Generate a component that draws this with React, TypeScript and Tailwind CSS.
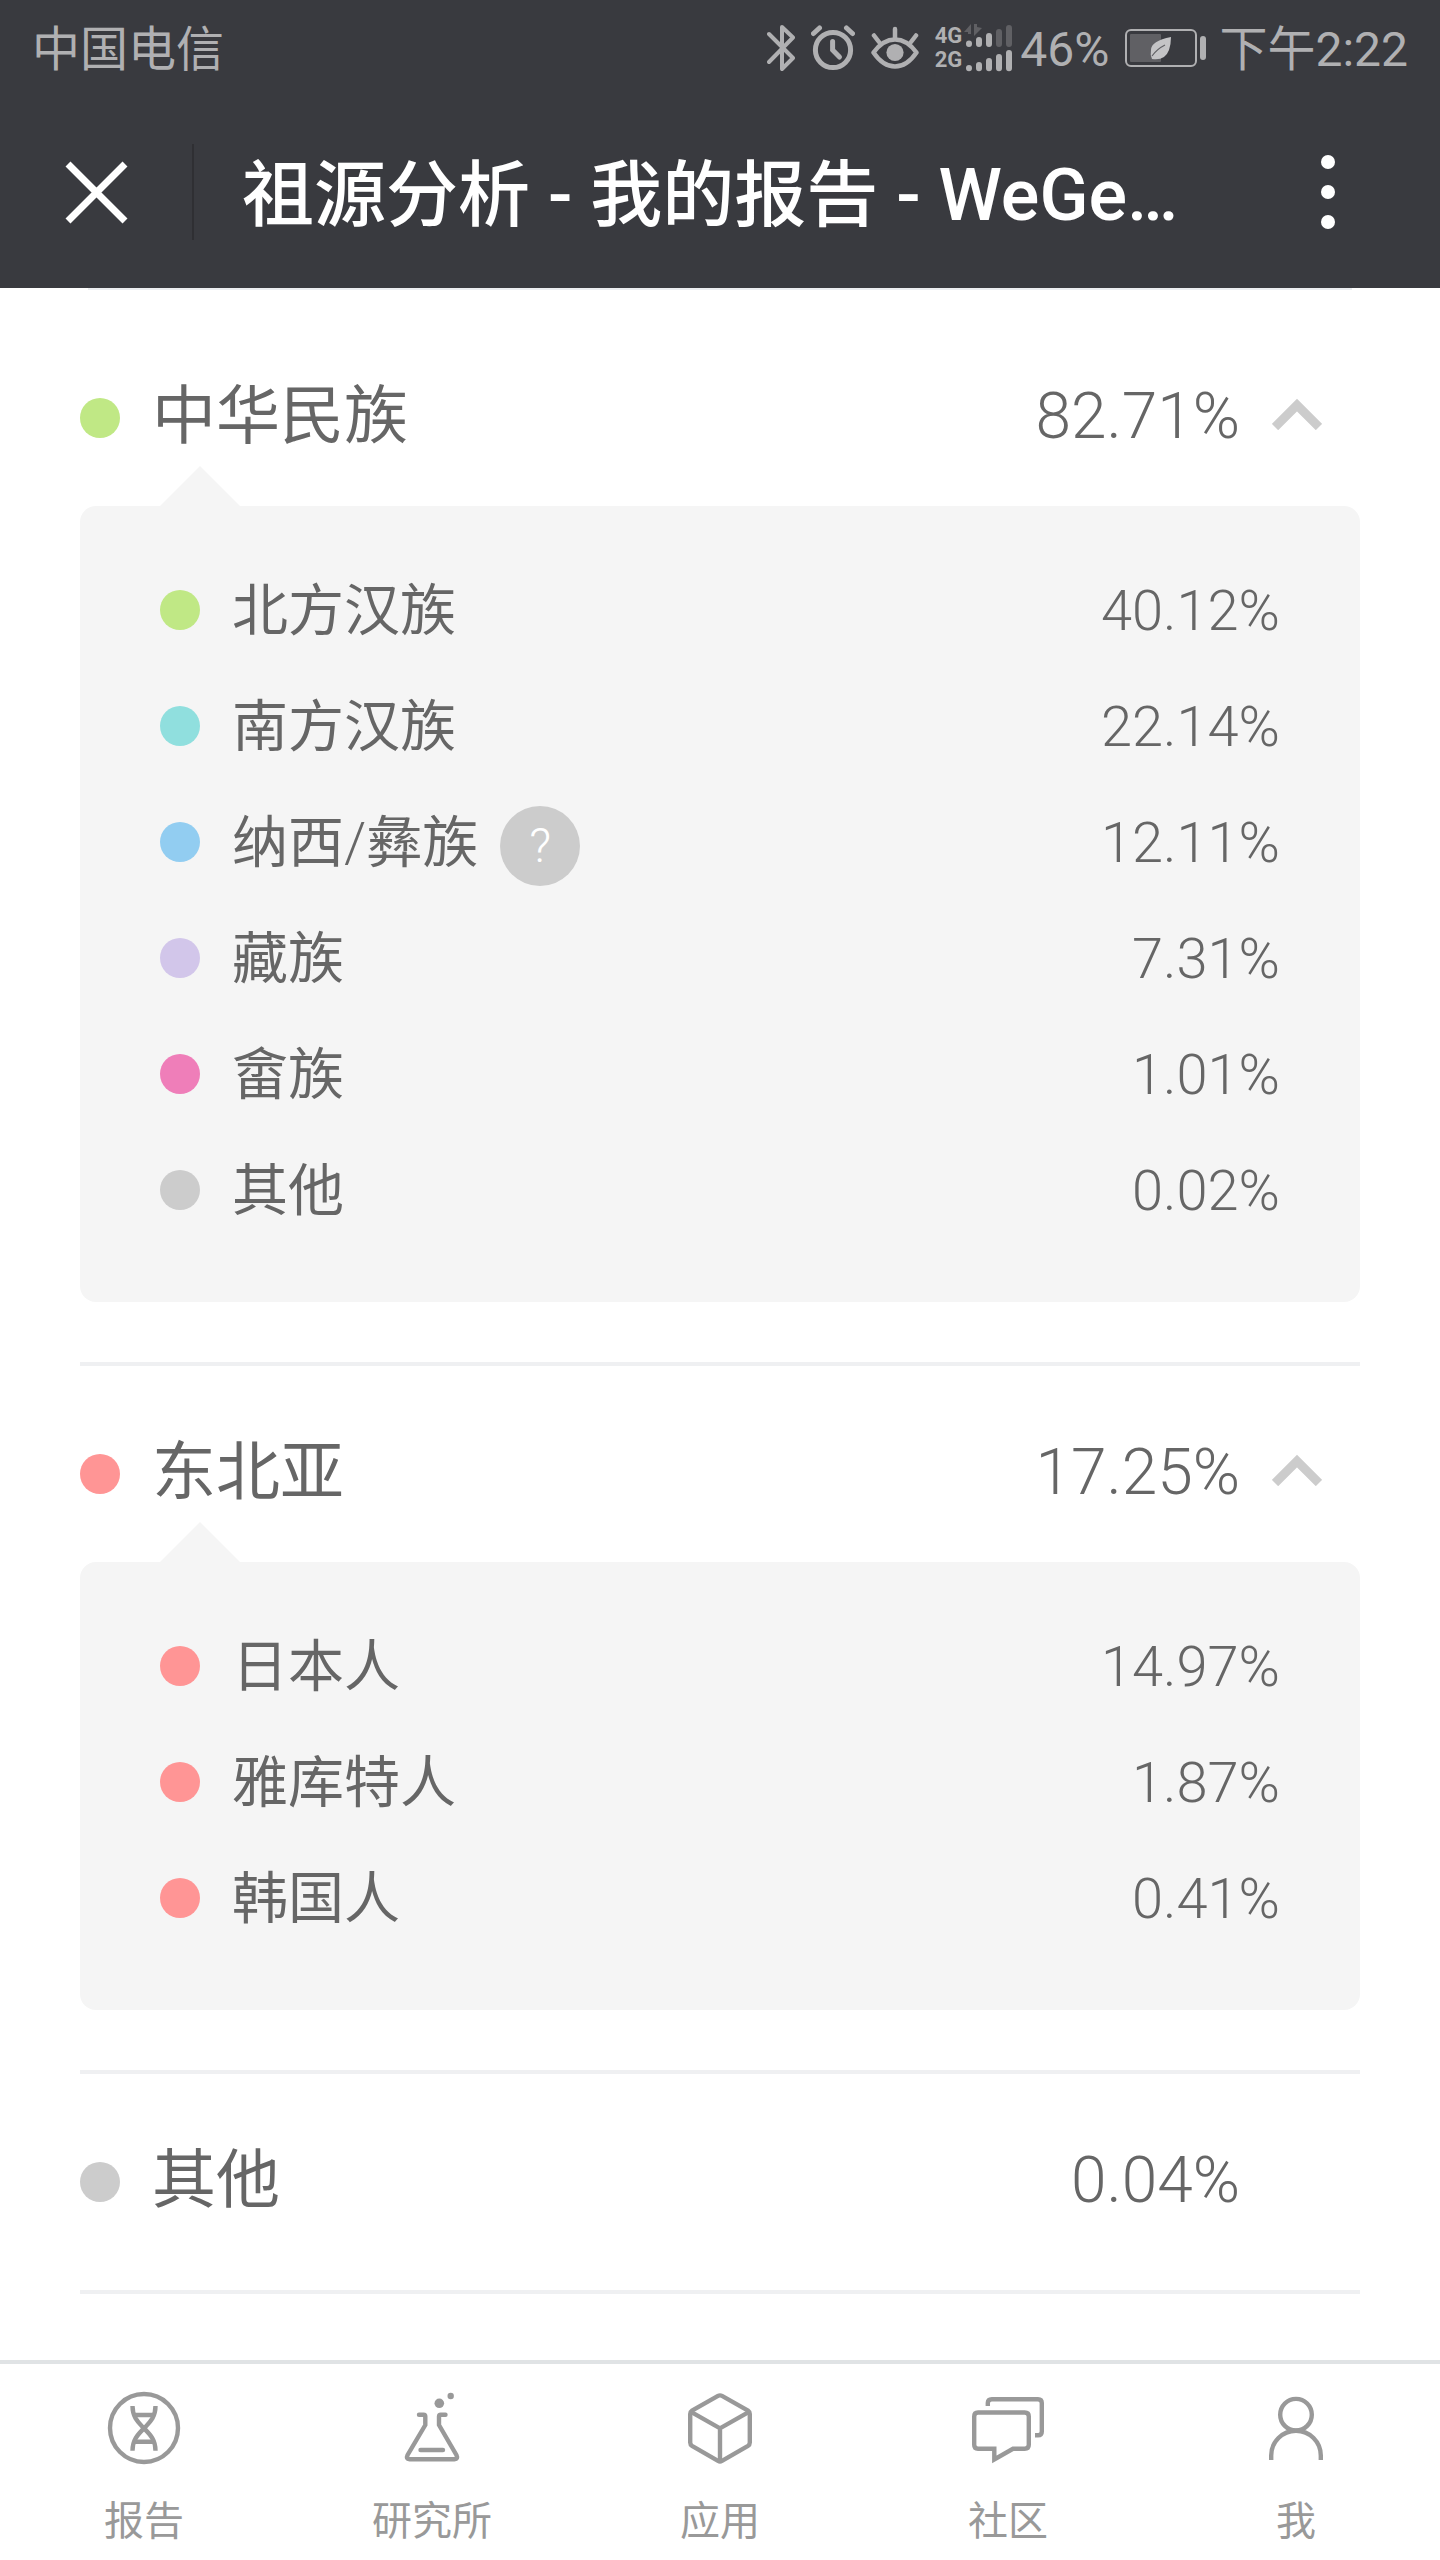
import { useState } from "react";
import type { ReactNode } from "react";

type Item = { name: ReactNode; value: string; dot: string; help?: boolean };
type Group = { name: string; value: string; dot: string; items?: Item[] };

const groups: Group[] = [
  {
    name: "中华民族",
    value: "82.71%",
    dot: "bg-[#c0e885]",
    items: [
      { name: "北方汉族", value: "40.12%", dot: "bg-[#c0e885]" },
      { name: "南方汉族", value: "22.14%", dot: "bg-[#90dfde]" },
      {
        name: (
          <>
            纳西<span className="font-light">/</span>彝族
          </>
        ),
        value: "12.11%",
        dot: "bg-[#92cdf1]",
        help: true,
      },
      { name: "藏族", value: "7.31%", dot: "bg-[#d2c6ea]" },
      { name: "畲族", value: "1.01%", dot: "bg-[#ef7eb9]" },
      { name: "其他", value: "0.02%", dot: "bg-[#cccccc]" },
    ],
  },
  {
    name: "东北亚",
    value: "17.25%",
    dot: "bg-[#ff9595]",
    items: [
      { name: "日本人", value: "14.97%", dot: "bg-[#ff9595]" },
      { name: "雅库特人", value: "1.87%", dot: "bg-[#ff9595]" },
      { name: "韩国人", value: "0.41%", dot: "bg-[#ff9595]" },
    ],
  },
  { name: "其他", value: "0.04%", dot: "bg-[#cccccc]" },
];

const tabs: { label: string; icon: ReactNode }[] = [
  {
    label: "报告",
    icon: (
      <>
        <circle cx="40" cy="40" r="34" />
        <path d="M28.5 18C28.5 30 35 35 40 40.3C45 45.6 51.5 51 51.5 62.7" />
        <path d="M51.5 18C51.5 30 45 35 40 40.3C35 45.6 28.5 51 28.5 62.7" />
        <path d="M31 27H49M31 53.7H49" />
      </>
    ),
  },
  {
    label: "研究所",
    icon: (
      <>
        <path
          d="M27 26.7H31.5Q33.3 26.7 33.3 28.5V37L15.6 67Q13.6 71.3 17.5 71.3H62.5Q66.4 71.3 64.4 67L47 37V28.5Q47 26.7 48.8 26.7H53.5"
          strokeLinecap="round"
        />
        <path d="M28.5 62H51" strokeLinecap="round" />
        <circle cx="47.3" cy="15.3" r="4.8" fill="currentColor" stroke="none" />
        <circle cx="58.7" cy="8" r="3.2" fill="currentColor" stroke="none" />
      </>
    ),
  },
  {
    label: "应用",
    icon: (
      <>
        <path d="M38 7.9Q40 6.8 42 7.9L68 22.6Q69.8 23.8 69.8 26V54.5Q69.8 56.7 68 57.8L42 72.9Q40 74 38 72.9L12 57.8Q10.2 56.7 10.2 54.5V26Q10.2 23.8 12 22.6Z" />
        <path d="M11 23.8L40 40.3L69 23.8M40 40.3V73" />
      </>
    ),
  },
  {
    label: "社区",
    icon: (
      <>
        <path d="M10 24.5H56.7Q60.8 24.5 60.8 28.5V56.8Q60.8 60.8 56.7 60.8H45L26.3 71.5V60.8H10Q6.2 60.8 6.2 56.8V28.5Q6.2 24.5 10 24.5Z" />
        <path d="M19.8 18V15Q19.8 11.2 23.8 11.2H70Q73.8 11.2 73.8 15V43.5Q73.8 47.3 70 47.3H67" />
      </>
    ),
  },
  {
    label: "我",
    icon: (
      <>
        <circle cx="40" cy="26.7" r="15.8" />
        <path d="M15.2 72V67.5A24.8 24.8 0 0 1 64.8 67.5V72" />
      </>
    ),
  },
];

function StatusBar() {
  return (
    <div className="flex h-24 items-center justify-between px-8 text-[48px] leading-[64px] text-[#b0b0b2]">
      <span className="pt-1">中国电信</span>
      <div className="flex items-center">
        <svg className="mr-4 h-12 w-7" viewBox="0 0 28 48" fill="none" stroke="currentColor" strokeWidth="4" strokeLinecap="round" strokeLinejoin="round" aria-label="蓝牙">
          <path d="M2 10L26 34L15 45V3L26 13.5L2 38" />
        </svg>
        <svg className="mr-4 h-12 w-11" viewBox="0 0 44 48" fill="none" stroke="currentColor" strokeWidth="5" strokeLinecap="round" aria-label="闹钟">
          <circle cx="22" cy="26" r="17.6" />
          <path d="M21.6 17.5V26L28.5 33" />
          <path d="M2.5 9.5L8.5 4M41.5 9.5L35.5 4" />
        </svg>
        <svg className="mr-4 h-12 w-12" viewBox="0 0 48 48" fill="none" stroke="currentColor" strokeWidth="4.5" strokeLinecap="round" strokeLinejoin="round" aria-label="护眼模式">
          <path d="M2.5 28.5Q12 15.5 24 15.5Q36 15.5 45.5 28.5Q36 42.5 24 42.5Q12 42.5 2.5 28.5Z" />
          <circle cx="24" cy="28.5" r="8.6" fill="currentColor" stroke="none" />
          <path d="M24 5V14M3 11.5L8 18M45 11.5L40 18" />
        </svg>
        <div className="mr-2 flex items-center gap-[2px]">
          <div className="flex flex-col text-[22px] leading-6 font-bold">
            <span>4G</span>
            <span>2G</span>
          </div>
          <svg className="h-12 w-12" viewBox="0 0 48 48" fill="none" stroke="currentColor" strokeWidth="6" strokeLinecap="round" aria-label="信号">
            <path d="M5 19.5V20M15 16V20M25 12V20" />
            <path d="M35 8V20M45 4V20" stroke="#606064" />
            <path d="M5 44V44.2M15 41V44.2M25 37V44.2M35 33V44.2M45 29V44.2" />
            <path d="M0 8L7 0V10H4V8ZM10 0H13V3L18 4L10 12Z" fill="#606064" stroke="none" />
          </svg>
        </div>
        <span className="mr-4 pt-1">46%</span>
        <svg className="mr-3 h-10 w-[82px]" viewBox="0 0 82 40" fill="none" aria-label="电池">
          <rect x="1" y="2" width="70" height="36" rx="5" stroke="currentColor" strokeWidth="2" />
          <rect x="5" y="6" width="31" height="28" rx="1" fill="#606064" />
          <rect x="75" y="8" width="6" height="24" rx="3" fill="currentColor" />
          <path d="M46 9Q26 13 26 22Q25 27 27 31Q40 33 44 22Q46 16 46 9Z" fill="#c4c4c6" />
          <path d="M27 28Q32 21 40 17" stroke="#606064" strokeWidth="1.2" />
        </svg>
        <time className="pt-1">下午2:22</time>
      </div>
    </div>
  );
}

function TitleBar() {
  return (
    <div className="flex h-48 items-center">
      <button type="button" aria-label="关闭" className="flex h-24 w-[194px] items-center border-r-2 border-[#2f2f33] pl-16">
        <svg className="size-16" viewBox="0 0 64 64" fill="none" stroke="#fff" strokeWidth="7">
          <path d="M4 4L61 61M61 4L4 61" />
        </svg>
      </button>
      <h1 className="min-w-0 flex-1 truncate pt-2 pl-12 text-[72px] leading-[96px] font-medium text-white">
        祖源分析 - 我的报告 - WeGe…
      </h1>
      <button type="button" aria-label="更多" className="mr-20 flex h-24 w-16 flex-col items-center justify-center gap-4">
        <span className="size-[14px] rounded-full bg-white" />
        <span className="size-[14px] rounded-full bg-white" />
        <span className="size-[14px] rounded-full bg-white" />
      </button>
    </div>
  );
}

function GroupHeader({ group, open }: { group: Group; open: boolean }) {
  return (
    <>
      <span className={`mt-2 size-10 rounded-full ${group.dot}`} />
      <span className="ml-8 flex-1 pt-[6px] text-left">{group.name}</span>
      <span className="pt-[6px] font-light">{group.value}</span>
      <span className="mr-[38px] ml-8 w-[50px]">
        {group.items && (
          <svg className={open ? "h-8 w-[50px]" : "h-8 w-[50px] rotate-180"} viewBox="0 0 50 32" fill="none" stroke="#ccc" strokeWidth="9">
            <path d="M3 29L25 7L47 29" />
          </svg>
        )}
      </span>
    </>
  );
}

function GroupSection({ group }: { group: Group }) {
  const [open, setOpen] = useState(true);
  const headClass = "flex h-[184px] w-full items-center text-[64px] leading-[80px]";

  if (!group.items) {
    return (
      <section className="border-b-4 border-[#eff0f2] pt-3 pb-5">
        <div className={headClass}>
          <GroupHeader group={group} open={false} />
        </div>
      </section>
    );
  }

  return (
    <section className="border-b-4 border-[#eff0f2] pt-3 pb-[60px]">
      <button type="button" aria-expanded={open} onClick={() => setOpen(!open)} className={headClass}>
        <GroupHeader group={group} open={open} />
      </button>
      {open && (
        <div className="relative rounded-2xl bg-[#f5f5f5] px-20 pt-[46px] pb-[54px]">
          <svg className="absolute -top-10 left-20 h-10 w-20" viewBox="0 0 80 40" fill="#f5f5f5" aria-hidden>
            <path d="M0 40L40 0L80 40Z" />
          </svg>
          <ul>
            {group.items.map((item) => (
              <li key={item.value} className="flex h-[116px] items-center text-[56px] leading-[72px]">
                <span className={`mr-8 size-10 rounded-full ${item.dot}`} />
                <span className="pt-[2px]">{item.name}</span>
                {item.help && (
                  <button type="button" aria-label="说明" className="mt-2 ml-[22px] flex size-20 items-center justify-center rounded-full bg-[#ccc] text-[48px] font-light text-white">
                    ?
                  </button>
                )}
                <span className="ml-auto pt-[2px] font-light">{item.value}</span>
              </li>
            ))}
          </ul>
        </div>
      )}
    </section>
  );
}

export default function App() {
  return (
    <div className="flex min-h-screen flex-col bg-white font-[Roboto,'Noto_Sans_CJK_SC',sans-serif]" lang="zh-CN">
      <header className="bg-[#393a3f]">
        <StatusBar />
        <TitleBar />
      </header>
      <main className="flex-1 px-20 text-[#666]">
        <div className="mx-2 mb-5 h-[2px] bg-[#eceef1]" />
        {groups.map((group) => (
          <GroupSection key={group.name} group={group} />
        ))}
      </main>
      <nav className="grid grid-cols-5 border-t-4 border-[#e0e3e5] pt-6 pb-3 text-[#999]">
        {tabs.map((tab) => (
          <a key={tab.label} href="#" className="flex flex-col items-center gap-7 text-[40px] leading-[52px]">
            <svg className="size-20" viewBox="0 0 80 80" fill="none" stroke="currentColor" strokeWidth="4.4" aria-hidden>
              {tab.icon}
            </svg>
            {tab.label}
          </a>
        ))}
      </nav>
    </div>
  );
}
